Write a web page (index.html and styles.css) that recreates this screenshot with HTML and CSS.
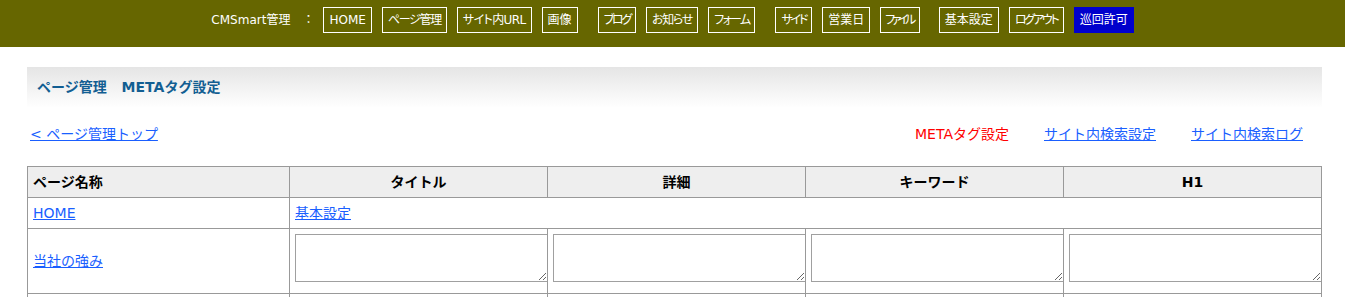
FILE: index.html
```html
<!DOCTYPE html>
<html lang="ja">
<head>
    <meta charset="UTF-8">
    <title>ページ管理 METAタグ設定</title>
    <link rel="stylesheet" href="styles.css">
</head>
<body>
    <div class="header">
        <span class="site-name">CMSmart管理</span>
        <span class="colon">：</span>
        <a class="nav-item" href="#">HOME</a>
        <a class="nav-item kana" href="#">ページ管理</a>
        <a class="nav-item kana-url" href="#">サイト内URL</a>
        <a class="nav-item" href="#">画像</a>
        <a class="nav-item kana-tight group" href="#">ブログ</a>
        <a class="nav-item kana" href="#">お知らせ</a>
        <a class="nav-item kana-mid" href="#">フォーム</a>
        <a class="nav-item kana-tight group" href="#">サイド</a>
        <a class="nav-item" href="#">営業日</a>
        <a class="nav-item kana-small" href="#">ファイル</a>
        <a class="nav-item group-sm" href="#">基本設定</a>
        <a class="nav-item kana-tight" href="#">ログアウト</a>
        <a class="nav-item active" href="#">巡回許可</a>
    </div>

    <div class="content">
        <div class="page-title">
            <span>ページ管理</span>
            <span class="sub">METAタグ設定</span>
        </div>

        <div class="link-row">
            <a href="#">&lt; ページ管理トップ</a>
            <div class="sub-links">
                <span class="current">METAタグ設定</span>
                <a href="#">サイト内検索設定</a>
                <a href="#">サイト内検索ログ</a>
            </div>
        </div>

        <table class="meta-table">
            <colgroup>
                <col class="col-name">
                <col><col><col><col>
            </colgroup>
            <tr>
                <th class="left">ページ名称</th>
                <th>タイトル</th>
                <th>詳細</th>
                <th>キーワード</th>
                <th>H1</th>
            </tr>
            <tr>
                <td><a href="#">HOME</a></td>
                <td colspan="4"><a href="#">基本設定</a></td>
            </tr>
            <tr>
                <td><a href="#">当社の強み</a></td>
                <td><textarea></textarea></td>
                <td><textarea></textarea></td>
                <td><textarea></textarea></td>
                <td><textarea></textarea></td>
            </tr>
            <tr>
                <td></td>
                <td><textarea></textarea></td>
                <td><textarea></textarea></td>
                <td><textarea></textarea></td>
                <td><textarea></textarea></td>
            </tr>
        </table>
    </div>
</body>
</html>
```

FILE: styles.css
```css
body {
    margin: 0;
    font-family: "DejaVu Sans", "Noto Sans CJK JP", sans-serif;
    font-size: 14px;
    color: #000;
    background-color: white;
}
a {
    color: #1a5fff;
}
.header {
    height: 47px;
    box-sizing: border-box;
    padding-top: 7px;
    background-color: #666600;
    display: flex;
    justify-content: center;
    align-items: flex-start;
    gap: 10px;
    font-size: 12px;
    color: white;
    font-feature-settings: "palt";
}
.site-name {
    line-height: 26px;
}
.colon {
    line-height: 26px;
    margin-left: 5px;
    margin-right: 2px;
}
.nav-item {
    display: block;
    height: 26px;
    box-sizing: border-box;
    line-height: 24px;
    padding: 0 5px;
    border: 1px solid white;
    color: white;
    text-decoration: none;
    white-space: nowrap;
}
.nav-item.kana {
    letter-spacing: -1.3px;
}
.nav-item.kana-url {
    letter-spacing: -0.6px;
}
.nav-item.kana-mid {
    letter-spacing: -1.7px;
}
.nav-item.kana-tight {
    letter-spacing: -2.2px;
}
.nav-item.kana-small {
    letter-spacing: -3.5px;
    padding: 0 6px 0 4px;
}
.nav-item.group {
    margin-left: 10px;
}
.nav-item.group-sm {
    margin-left: 9px;
}
.nav-item.active {
    background-color: #0000cc;
    border-color: #0000cc;
}
.content {
    margin: 20px 23px 0 27px;
}
.page-title {
    height: 41px;
    line-height: 41px;
    padding: 0 10px;
    background: linear-gradient(#e5e5e5, #ffffff);
    color: #125e92;
    font-weight: bold;
    font-size: 14px;
}
.page-title .sub {
    margin-left: 10px;
}
.link-row {
    display: flex;
    justify-content: space-between;
    margin-top: 16px;
    line-height: 20px;
    padding-left: 3px;
    padding-right: 19px;
}
.sub-links {
    display: flex;
    gap: 35px;
}
.sub-links .current {
    color: #ff0000;
}
.meta-table {
    width: 100%;
    margin-top: 22px;
    border-collapse: collapse;
    table-layout: fixed;
}
.col-name {
    width: 262px;
}
.meta-table th,
.meta-table td {
    border: 1px solid #999;
    padding: 5px;
    line-height: 20px;
}
.meta-table th {
    background-color: #eeeeee;
    text-align: center;
    font-weight: bold;
}
.meta-table th.left {
    text-align: left;
}
.meta-table td {
    vertical-align: middle;
}
.meta-table textarea {
    display: block;
    width: 100%;
    height: 42px;
    margin: 0 0 6px 0;
    padding: 2px;
    border: 1px solid #a0a0a0;
    font-family: "DejaVu Sans", "Noto Sans CJK JP", sans-serif;
    font-size: 13px;
}
```
